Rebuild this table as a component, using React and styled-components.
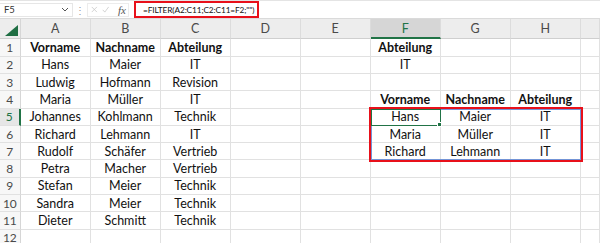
import React from 'react'
import styled, { createGlobalStyle, css } from 'styled-components'

const GlobalStyle = createGlobalStyle`
  html, body { margin: 0; padding: 0; background: #fff; }
  body { width: 600px; height: 243px; overflow: hidden; font-family: Lato, "Liberation Sans", sans-serif; }
`

const GREEN = '#217346'
const GRID = '#e1e1e1'

// formula bar at the top
const FormulaBar = styled.div`
  display: flex;
  align-items: center;
  height: 19px;
  box-sizing: border-box;
  border-top: 1px solid #e4e4e4;
  border-bottom: 1px solid #dadada;
  background: #fff;
`

const NameBox = styled.div`
  display: flex;
  align-items: center;
  justify-content: space-between;
  width: 73px;
  height: 14px;
  box-sizing: border-box;
  padding: 0 3px 0 4px;
  border: 1px solid #e6e6e6;
  border-left: none;
  font-size: 9.5px;
  color: #333;
`

const Dots = styled.div`
  width: 14px;
  text-align: center;
  color: #9a9a9a;
  font-size: 10px;
  line-height: 1;
`

const FuncBox = styled.div`
  display: flex;
  align-items: center;
  gap: 4px;
  width: 42px;
  height: 14px;
  box-sizing: border-box;
  padding: 0 2px 0 3px;
  border: 1px solid #ececec;
`

const Fx = styled.span`
  font-family: "Liberation Serif", serif;
  font-style: italic;
  font-size: 11px;
  color: #555;
  margin-left: 5px;
`

const FormulaField = styled.div`
  flex: 1;
  display: flex;
  align-items: center;
  padding-left: 5px;
  height: 100%;
`

const Highlight = styled.span`
  display: inline-flex;
  align-items: center;
  height: 17px;
  box-sizing: border-box;
  padding: 0 3px 0 7px;
  border: 2px solid #e8101a;
  font-size: 8.3px;
  letter-spacing: -0.12px;
  color: #111;
  width: 125px;
  white-space: nowrap;
  overflow: hidden;
`

// the sheet itself
const Sheet = styled.div`
  display: grid;
  grid-template-columns: 20.7px repeat(8, 70px) 1fr;
  grid-template-rows: 20.4px repeat(12, 17.3px);
`

const Corner = styled.div`
  grid-row: 1;
  grid-column: 1;
  display: flex;
  align-items: flex-end;
  justify-content: flex-end;
  padding: 0 2px 2px 0;
  box-sizing: border-box;
  background: #ededed;
  border-right: 1px solid #d6d6d6;
  border-bottom: 1px solid #cfcfcf;
`

const ColHead = styled.div`
  grid-row: 1;
  grid-column: ${p => p.$col};
  display: flex;
  align-items: center;
  justify-content: center;
  box-sizing: border-box;
  background: #ededed;
  border-right: 1px solid #dcdcdc;
  border-bottom: 1px solid #cfcfcf;
  font-size: 12.5px;
  color: #4a4a4a;
  ${p => p.$active && css`
    background: #d6d6d6;
    color: ${GREEN};
    border-bottom: 2px solid ${GREEN};
  `}
`

const RowHead = styled.div`
  grid-row: ${p => p.$row};
  grid-column: 1;
  display: flex;
  align-items: center;
  justify-content: center;
  box-sizing: border-box;
  background: #f7f7f7;
  border-right: 1px solid #d6d6d6;
  border-bottom: 1px solid ${GRID};
  font-size: 12px;
  color: #4a4a4a;
  ${p => p.$active && css`
    color: ${GREEN};
    background: #e6e6e6;
    border-right: 2px solid ${GREEN};
  `}
`

const Cell = styled.div`
  grid-row: ${p => p.$row};
  grid-column: ${p => p.$col};
  display: flex;
  align-items: center;
  justify-content: center;
  box-sizing: border-box;
  border-right: 1px solid ${GRID};
  border-bottom: 1px solid ${GRID};
  font-size: 12.5px;
  font-weight: ${p => (p.$bold ? 700 : 400)};
  color: #111;
  white-space: nowrap;
`

const Spill = styled.div`
  grid-column: 7 / 10;
  grid-row: 6 / 9;
  box-sizing: border-box;
  border: 1px solid #7394d6;
  outline: 2px solid #e8101a;
  pointer-events: none;
  z-index: 2;
`

const Selection = styled.div`
  grid-column: 7;
  grid-row: 6;
  position: relative;
  box-sizing: border-box;
  border: 1px solid ${GREEN};
  z-index: 3;
  &::after {
    content: '';
    position: absolute;
    right: -2px;
    bottom: -2px;
    width: 3px;
    height: 3px;
    background: ${GREEN};
    border: 1px solid #fff;
  }
`

const cols = ['A', 'B', 'C', 'D', 'E', 'F', 'G', 'H', '']

const rows = [
  [['Vorname', 'Nachname', 'Abteilung', '', '', 'Abteilung', '', '', ''], true],
  [['Hans', 'Maier', 'IT', '', '', 'IT', '', '', '']],
  [['Ludwig', 'Hofmann', 'Revision', '', '', '', '', '', '']],
  [['Maria', 'Müller', 'IT', '', '', 'Vorname', 'Nachname', 'Abteilung', '']],
  [['Johannes', 'Kohlmann', 'Technik', '', '', 'Hans', 'Maier', 'IT', '']],
  [['Richard', 'Lehmann', 'IT', '', '', 'Maria', 'Müller', 'IT', '']],
  [['Rudolf', 'Schäfer', 'Vertrieb', '', '', 'Richard', 'Lehmann', 'IT', '']],
  [['Petra', 'Macher', 'Vertrieb', '', '', '', '', '', '']],
  [['Stefan', 'Meier', 'Technik', '', '', '', '', '', '']],
  [['Sandra', 'Meier', 'Technik', '', '', '', '', '', '']],
  [['Dieter', 'Schmitt', 'Technik', '', '', '', '', '', '']],
  [['', '', '', '', '', '', '', '', '']],
]

const isBold = (r, c, allBold) => allBold || (r === 3 && c >= 5 && c <= 7)

const Chevron = () => (
  <svg width="8" height="5" viewBox="0 0 8 5">
    <path d="M1 1 L4 4 L7 1" fill="none" stroke="#555" strokeWidth="1" />
  </svg>
)

const Cross = () => (
  <svg width="9" height="9" viewBox="0 0 9 9">
    <path d="M1 1 L8 8 M8 1 L1 8" stroke="#c4c4c4" strokeWidth="1" />
  </svg>
)

const Check = () => (
  <svg width="10" height="9" viewBox="0 0 10 9">
    <path d="M1 5 L3.8 8 L9 1" fill="none" stroke="#c4c4c4" strokeWidth="1" />
  </svg>
)

const Triangle = () => (
  <svg width="13" height="11" viewBox="0 0 13 11">
    <path d="M13 0 L13 11 L0 11 Z" fill="#1f6e43" />
  </svg>
)

export default function App() {
  return (
    <>
      <GlobalStyle />
      <FormulaBar>
        <NameBox>
          <span>F5</span>
          <Chevron />
        </NameBox>
        <Dots>⋮</Dots>
        <FuncBox>
          <Cross />
          <Check />
          <Fx>fx</Fx>
        </FuncBox>
        <FormulaField>
          <Highlight>=FILTER(A2:C11;C2:C11=F2;"")</Highlight>
        </FormulaField>
      </FormulaBar>
      <Sheet>
        <Corner><Triangle /></Corner>
        {cols.map((c, i) => (
          <ColHead key={i} $col={i + 2} $active={c === 'F'}>{c}</ColHead>
        ))}
        {rows.map(([cells, allBold], r) => (
          <React.Fragment key={r}>
            <RowHead $row={r + 2} $active={r === 4}>{r + 1}</RowHead>
            {cells.map((v, c) => (
              <Cell key={c} $row={r + 2} $col={c + 2} $bold={isBold(r, c, allBold)}>{v}</Cell>
            ))}
          </React.Fragment>
        ))}
        <Spill />
        <Selection />
      </Sheet>
    </>
  )
}
